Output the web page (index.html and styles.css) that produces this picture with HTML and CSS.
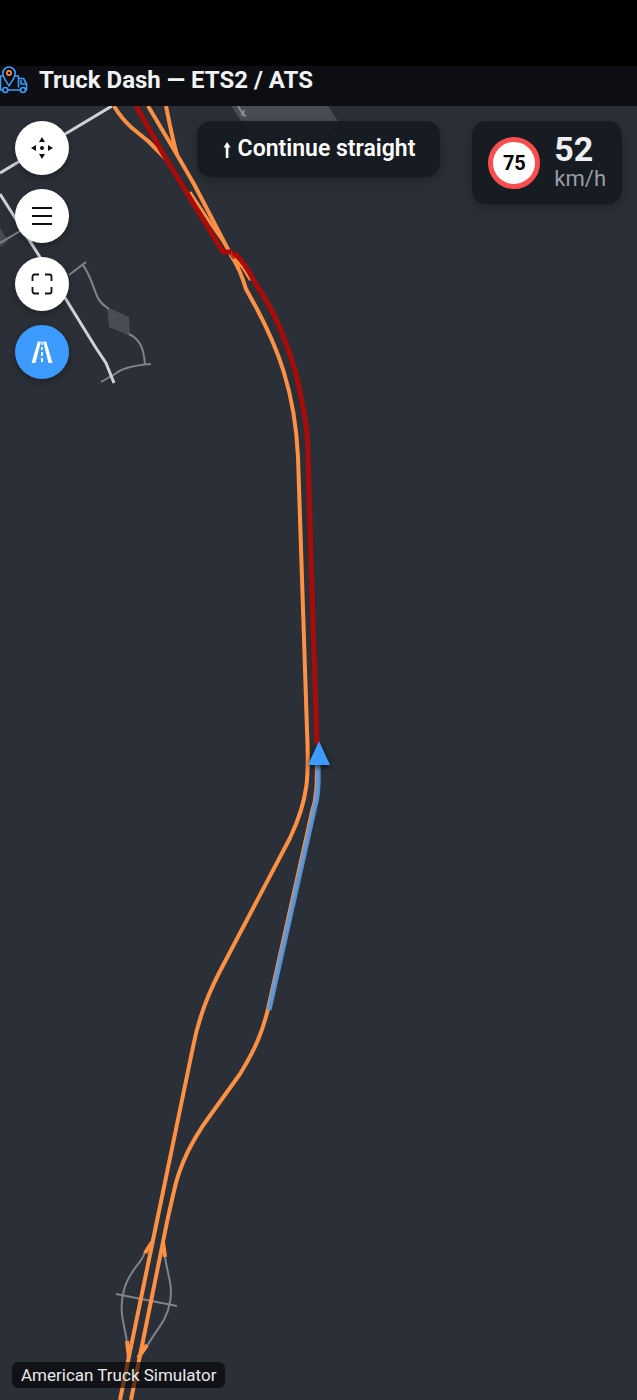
FILE: index.html
```
<!DOCTYPE html>
<html lang="en">
<head>
    <meta charset="UTF-8">
    <meta name="viewport" content="width=device-width, initial-scale=1.0">
    <title>Truck Dash — ETS2 / ATS</title>
    <link rel="stylesheet" href="styles.css">
</head>
<body>
    <div class="safe-area"></div>

    <header class="topbar">
        <svg class="logo" viewBox="0 0 28 28" aria-hidden="true">
            <g fill="none" stroke="#3f9cfb" stroke-width="1.6" stroke-linejoin="round" stroke-linecap="round">
                <path d="M2.800 10H.5V24H2.500M8 24h12.500M25.500 24H26.500V18L23.500 12.500H18.500V21M18.500 12.500V10H15.500"/>
                <path d="M9 20C7 16 2.800 12 2.800 7.200a6.200 6.200 0 0 1 12.400 0C15.200 12 11 16 9 20z"/>
                <path d="M21 14.500v3.500H26"/>
                <circle cx="5.300" cy="24" r="2.500"/>
                <circle cx="23" cy="24" r="2.500"/>
            </g>
            <circle cx="9" cy="7" r="2.100" fill="none" stroke="#ff8f45" stroke-width="1.600"/>
        </svg>
        <h1>Truck Dash — ETS2 / ATS</h1>
    </header>

    <main class="map">
        <svg class="map-canvas" viewBox="0 106 637 1294" preserveAspectRatio="xMidYMid slice" role="img" aria-label="Road map">
            <!-- buildings and yards -->
            <path class="area" d="M231 106H328L338 121 L325 138H253z"/>
            <path class="area-mark" d="M238 106l6 10M241 114l5 2M244 110l-1 6"/>
            <path class="area" d="M107 307L129 317 130 336 109 327z"/>
            <path class="area dim" d="M0 228L8 241 0 247z"/>

            <!-- local roads -->
            <g class="road-minor">
                <path d="M0 243L22 230M69 275L86 262M82 264C94 278 94 300 105 306L109 309M129 334C142 340 144 352 145 365"/>
                <path d="M101 382L115 374Q124 366 151 364"/>
                <path d="M116 1294L177 1306"/>
                <path d="M145 1252C141 1265 129 1270 124 1290C118 1312 125 1325 127 1343"/>
                <path d="M165 1257C168 1277 173 1285 170 1302C167 1320 157 1329 147 1346"/>
            </g>
            <g class="road-main">
                <path d="M0 173L112 106"/>
                <path d="M0 194L38 254 96 348 106 363 114 383"/>
            </g>

            <!-- highway -->
            <g class="highway">
                <path d="M114 106Q121 118 132 128L148 141 166 159"/>
                <path d="M148 106L176 153 194 184 232 257Q240 269 246 289L257 309C276 345 295 389 298 457L307 730C309 775 309 798 290 838L219 973Q200 1010 193 1047L152 1245 120 1400"/>
                <path d="M166 106Q173 141 177 155"/>
                <path class="thin" d="M190 192L213 227 229 250"/>
                <path d="M233 257L243 267 251 280"/>
                <path class="thin" d="M254 280Q278 316 286 343"/>
                <path d="M317 755C317 785 317 797 312 812L268 1009C263 1030 256 1048 240 1074L209 1117Q182 1154 174 1191Q167 1220 162 1247L131 1400"/>
                <path d="M152 1242L145 1253M163 1242L165 1257M127 1341L129 1358M147 1345L138 1358"/>
            </g>

            <!-- planned route ahead and the part already driven -->
            <path class="route" d="M136 106L165 157 223 252H231"/>
            <path class="route link" d="M229 250L235 258"/>
            <path class="route" d="M234 253Q244 261 254 281Q275 312 287 346Q297 373 302 402Q308 430 308 455L311 560 317 745"/>
            <path class="driven" d="M318 765Q319 793 315 806L269 1010"/>

            <path class="truck" d="M319 741L330 765H308z"/>
        </svg>

        <nav class="controls" aria-label="Map controls">
            <button type="button" class="control" aria-label="Center on truck">
                <svg viewBox="0 0 24 24" fill="currentColor">
                    <circle cx="12" cy="12" r="2"/>
                    <path d="M12 1l3 5H9zM12 23l3-5H9zM1 12l5-3v6zM23 12l-5-3v6z"/>
                </svg>
            </button>
            <button type="button" class="control" aria-label="Menu">
                <svg viewBox="0 0 24 24" fill="none" stroke="currentColor" stroke-width="2">
                    <path d="M2 4h20M2 12h20M2 20h20"/>
                </svg>
            </button>
            <button type="button" class="control" aria-label="Fullscreen">
                <svg viewBox="0 0 24 24" fill="none" stroke="currentColor" stroke-width="1.800">
                    <path d="M2.500 9V4.500a2 2 0 0 1 2-2H9M15 2.500h4.500a2 2 0 0 1 2 2V9M21.500 15v4.500a2 2 0 0 1-2 2H15M9 21.500H4.500a2 2 0 0 1-2-2V15"/>
                </svg>
            </button>
            <button type="button" class="control active" aria-label="Road view">
                <svg viewBox="0 0 24 24" fill="currentColor">
                    <path d="M8 1l1.500 1L11 1 5.500 23H1.500zM16 1l-1.500 1L13 1l5.500 22h4zM11.300 2h1.400v3h-1.400zM11.200 7h1.600v3h-1.600zM11.100 12h1.800v4h-1.800zM11 18h2v4h-2z"/>
                </svg>
            </button>
        </nav>

        <div class="panel turn">
            <svg viewBox="0 0 10 18" aria-hidden="true">
                <path d="M5 2L1.500 7.500H3.700V18H6.300V7.500H8.500z" fill="currentColor"/>
            </svg>
            <span>Continue straight</span>
        </div>

        <div class="panel speed">
            <div class="limit">75</div>
            <div class="current">
                <strong>52</strong>
                <span>km/h</span>
            </div>
        </div>

        <div class="game">American Truck Simulator</div>
    </main>
</body>
</html>
```
FILE: styles.css
```
* {
    margin: 0;
    padding: 0;
    box-sizing: border-box;
}

body {
    font-family: Roboto, sans-serif;
    background: #2b2f37;
    color: #fff;
    display: flex;
    flex-direction: column;
    min-height: 100vh;
}

.safe-area {
    height: 66px;
    background: #000;
}

.topbar {
    display: flex;
    align-items: center;
    gap: 11px;
    padding-bottom: 12px;
    background: #0c0e12;
}

.topbar h1 {
    font-size: 24px;
    font-weight: 700;
    line-height: 28px;
    color: #f1f2f4;
}

.logo {
    width: 28px;
    height: 28px;
}

.map {
    position: relative;
    flex: 1;
    overflow: hidden;
}

.map-canvas {
    position: absolute;
    inset: 0;
    width: 100%;
    height: 100%;
    fill: none;
    stroke-linejoin: round;
}

.area {
    fill: #484c55;
}

.area.dim {
    fill: #474c50;
}

.area-mark {
    stroke: #868a92;
    stroke-width: 2;
}

.road-minor {
    stroke: #7f838c;
    stroke-width: 2;
}

.road-main {
    stroke: #cfd2db;
    stroke-width: 3;
}

.highway {
    stroke: #ff9044;
    stroke-width: 4;
}

.highway .thin {
    stroke-width: 3;
}

.route {
    stroke: #a90c08;
    stroke-width: 5;
}

.route.link {
    opacity: 0.7;
}

.driven {
    stroke: #5b9ade;
    stroke-width: 5;
    opacity: 0.9;
}

.truck {
    fill: #3d9bff;
    filter: drop-shadow(0 2px 3px rgba(0, 0, 0, 0.7));
}

.controls {
    position: absolute;
    top: 15px;
    left: 15px;
    display: flex;
    flex-direction: column;
    gap: 14px;
}

.control {
    display: flex;
    align-items: center;
    justify-content: center;
    width: 54px;
    height: 54px;
    border: none;
    border-radius: 50%;
    background: #fff;
    color: #111;
    cursor: pointer;
    box-shadow: 0 3px 8px rgba(0, 0, 0, 0.3);
}

.control svg {
    width: 24px;
    height: 24px;
}

.control.active {
    background: #3d9bff;
    color: #fff;
}

.panel {
    position: absolute;
    top: 15px;
    display: flex;
    align-items: center;
    border-radius: 14px;
    background: rgba(22, 26, 32, 0.93);
    box-shadow: 0 4px 12px rgba(0, 0, 0, 0.25);
}

.turn {
    left: 50%;
    transform: translateX(-50%);
    gap: 6px;
    padding: 14px 25px;
    font-size: 23px;
    font-weight: 600;
    line-height: 28px;
    white-space: nowrap;
}

.turn svg {
    width: 10px;
    height: 18px;
}

.speed {
    right: 15px;
    gap: 14px;
    padding: 12px 16px;
}

.limit {
    display: flex;
    align-items: center;
    justify-content: center;
    width: 52px;
    height: 52px;
    border: 5px solid #f94e4e;
    border-radius: 50%;
    background: #fff;
    color: #000;
    font-size: 20px;
    font-weight: 700;
}

.current {
    display: flex;
    flex-direction: column;
}

.current strong {
    font-size: 34px;
    font-weight: 700;
    line-height: 32px;
    color: #eef0f4;
}

.current span {
    font-size: 22px;
    line-height: 27px;
    color: #9a9da5;
}

.game {
    position: absolute;
    left: 12px;
    bottom: 12px;
    padding: 3px 9px;
    border-radius: 6px;
    background: rgba(0, 0, 0, 0.6);
    color: #e8e9eb;
    font-size: 17px;
    line-height: 20px;
}
```
